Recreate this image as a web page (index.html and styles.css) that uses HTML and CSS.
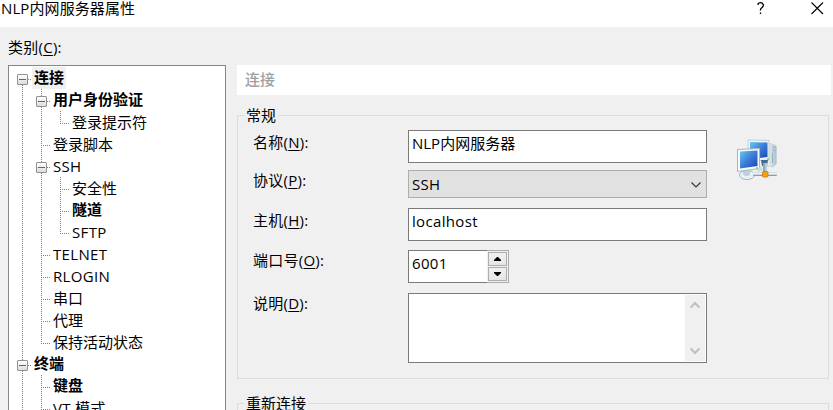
FILE: index.html
```html
<!DOCTYPE html>
<html lang="zh-CN">
<head>
<meta charset="utf-8">
<title>NLP内网服务器属性</title>
<link rel="stylesheet" href="styles.css">
</head>
<body>
<header class="titlebar">
  <h1 class="title">NLP内网服务器属性</h1>
  <svg class="help" width="8" height="13" viewBox="0 0 8 13"><path d="M1 3V2Q1.500 .7 3.500 .7T6.500 3Q6.500 4.500 4.800 5.700T3.500 8.500M3.500 10.500V12" fill="none" stroke="#000" stroke-width="1.300"/></svg>
  <svg class="close" width="13" height="13" viewBox="0 0 13 13"><path d="M.5 .5L12 12M12 .5L.5 12" stroke="#000" stroke-width="1.100"/></svg>
</header>
<main class="dialog">
  <div class="sidebar">
    <div class="caption">类别(<u>C</u>):</div>
    <div class="tree">
      <div class="row"><i class="down open"></i><b class="selected">连接</b></div>
      <div class="row"><i class="line"></i><i class="line open"></i><b>用户身份验证</b></div>
      <div class="row"><i class="line"></i><i class="line"></i><i class="up leaf"></i><span>登录提示符</span></div>
      <div class="row"><i class="line"></i><i class="line leaf"></i><span>登录脚本</span></div>
      <div class="row"><i class="line"></i><i class="line open"></i><span class="latin">SSH</span></div>
      <div class="row"><i class="line"></i><i class="line"></i><i class="line leaf"></i><span>安全性</span></div>
      <div class="row"><i class="line"></i><i class="line"></i><i class="line leaf"></i><b>隧道</b></div>
      <div class="row"><i class="line"></i><i class="line"></i><i class="up leaf"></i><span class="latin">SFTP</span></div>
      <div class="row"><i class="line"></i><i class="line leaf"></i><span class="latin">TELNET</span></div>
      <div class="row"><i class="line"></i><i class="line leaf"></i><span class="latin">RLOGIN</span></div>
      <div class="row"><i class="line"></i><i class="line leaf"></i><span>串口</span></div>
      <div class="row"><i class="line"></i><i class="line leaf"></i><span>代理</span></div>
      <div class="row"><i class="line"></i><i class="up leaf"></i><span>保持活动状态</span></div>
      <div class="row"><i class="line open"></i><b>终端</b></div>
      <div class="row"><i class="line"></i><i class="line leaf"></i><b>键盘</b></div>
      <div class="row"><i class="line"></i><i class="line leaf"></i><span class="latin">VT 模式</span></div>
    </div>
  </div>
  <div class="content">
    <div class="page-title">连接</div>
    <section class="group general">
      <h2 class="legend">常规</h2>
      <div class="form">
        <label>名称(<u>N</u>):</label><div class="field">NLP内网服务器</div>
        <label class="raised">协议(<u>P</u>):</label>
        <div class="field select"><span class="latin">SSH</span><svg width="10" height="6" viewBox="0 0 10 6"><path d="M.5 .5L5 5L9.500 .5" fill="none" stroke="#333" stroke-width="1.100"/></svg></div>
        <label>主机(<u>H</u>):</label><div class="field latin">localhost</div>
        <label class="raised">端口号(<u>O</u>):</label>
        <div class="port"><div class="field number latin">6001</div><div class="spinner">
          <div class="spin"><svg width="7" height="4"><path d="M0 4V3L3 0H4L7 3V4Z"/></svg></div>
          <div class="spin"><svg width="7" height="4"><path d="M0 0V1L3 4H4L7 1V0Z"/></svg></div>
        </div></div>
        <label class="raised">说明(<u>D</u>):</label>
        <div class="field memo"><div class="scrollbar">
          <svg width="10" height="8"><path d="M.7 6.500L5 2L9.300 6.500" fill="none" stroke="#bfbfbf" stroke-width="2"/></svg>
          <svg width="10" height="8"><path d="M.7 1.500L5 6L9.300 1.500" fill="none" stroke="#bfbfbf" stroke-width="2"/></svg>
        </div></div>
      </div>
      <svg class="network" width="42" height="42" viewBox="0 0 42 42">
        <defs>
          <linearGradient id="screen" x1="0" y1="0" x2="1" y2="1"><stop stop-color="#67c9f2"/><stop offset=".45" stop-color="#3f83dc"/><stop offset="1" stop-color="#1b43b0"/></linearGradient>
          <linearGradient id="tower"><stop stop-color="#f8fcfe"/><stop offset="1" stop-color="#a9bfca"/></linearGradient>
          <linearGradient id="pipe" x1="0" y1="0" x2="0" y2="1"><stop stop-color="#c5d5dc"/><stop offset=".45" stop-color="#f4fafc"/><stop offset="1" stop-color="#70838d"/></linearGradient>
        </defs>
        <path d="M32 4L39 6Q41 7 40.500 9V25L37 28L30 27Z" fill="url(#tower)" stroke="#c2d1d8" stroke-width=".7"/>
        <path d="M36.500 8L39.500 9M36.500 11L39.500 12M36.500 14V24" stroke="#94b0be" fill="none"/>
        <path d="M12 1L33 1.500V21L12 22Z" fill="#f2f8fb" stroke="#b3c4cd" stroke-width=".8"/>
        <path d="M14 3L31.500 3.500V18L14 20Z" fill="url(#screen)"/>
        <path d="M25 21H32L31 27H26Z" fill="#416c93"/>
        <path d="M29 24V34" stroke="#8faab8" stroke-width="4"/>
        <path d="M30 24V33" stroke="#e0edf3"/>
        <ellipse cx="11" cy="36" rx="7.500" ry="4.500" fill="#e8f3f8" stroke="#a0b5bf"/>
        <path d="M7 31H14V36Q11 38 7 36Z" fill="#bed0da"/>
        <path d="M1.500 10.500L23.500 9.500V29.500L1.500 32.500Z" fill="#f6fbfd" stroke="#a3b6c0"/>
        <path d="M4 12.500L21.500 11.500V27L4 29.500Z" fill="url(#screen)"/>
        <rect x="17" y="33" width="24" height="4" rx="1" fill="url(#pipe)"/>
        <path d="M20 31L25 27L27 31L22 33Z" fill="#cfdbe1"/>
        <rect x="26.500" y="32.500" width="5.500" height="5.500" rx="1" fill="#f4a20d" stroke="#c77516" stroke-width=".8"/>
        <path d="M20 29H22M31 20H33" stroke="#65d35b" stroke-width="1.500"/>
      </svg>
    </section>
    <section class="group reconnect"><h2 class="legend">重新连接</h2></section>
  </div>
</main>
</body>
</html>
```
FILE: styles.css
```css
*, *::before, *::after { box-sizing: border-box; }
html, body { height: 100%; overflow: hidden; }
body {
  margin: 0;
  display: flex;
  flex-direction: column;
  background: #f0f0f0;
  color: #000;
  font: 15px/20px "Open Sans", "Noto Sans CJK SC", sans-serif;
}
svg { display: block; flex: none; }
u { text-underline-offset: 2px; text-decoration-thickness: 1px; }
.titlebar { height: 27px; flex: none; display: flex; background: #fff; }
.title { flex: 1; margin: -2px 0 0 1px; font-size: 15px; font-weight: 400; letter-spacing: .1px; }
.help { margin: 2px 46px 0 0; }
.close { margin: 2px 9px 0 0; }
.dialog { flex: 1; min-height: 0; display: flex; gap: 11px; padding-left: 8px; }
.sidebar { width: 218px; flex: none; }
.caption { height: 38px; padding-top: 10px; letter-spacing: .25px; }
.tree { height: 345px; overflow: hidden; padding: 1px 0 0 4px; border: 1px solid #828790; border-bottom: 0; background: #fff; }
.row { display: flex; height: 22px; line-height: 21px; white-space: nowrap; }
.row b, .row span { padding: 0 2px; }
.row span { line-height: 23px; }
.row b { font-weight: 700; }
.row .selected { background: #f0f0f0; }
.latin { letter-spacing: .33px; }
.row i {
  --dots-y: repeating-linear-gradient(#808080 0 1px, transparent 1px 2px);
  --dots-x: repeating-linear-gradient(90deg, #808080 0 1px, transparent 1px 2px);
  position: relative;
  flex: none;
  width: 19px;
  height: 22px;
}
.line { background: var(--dots-y) 9px 0 / 1px 22px no-repeat; }
.up { background: var(--dots-y) 9px 0 / 1px 12px no-repeat; }
.down { background: var(--dots-y) 9px 12px / 1px 10px no-repeat; }
.leaf::after, .open::after {
  content: "";
  position: absolute;
  left: 9px;
  top: 12px;
  width: 9px;
  height: 1px;
  background: var(--dots-x);
}
.open::before {
  content: "";
  position: absolute;
  z-index: 1;
  left: 4px;
  top: 7px;
  width: 11px;
  height: 11px;
  border: 1px solid #919191;
  border-radius: 1px;
  background: linear-gradient(#4b63a7, #4b63a7) 1px 4px / 7px 1px no-repeat, linear-gradient(#fff, #dcdcdc);
}
.content { width: 594px; padding-top: 38px; }
.page-title { height: 30px; margin-bottom: 20px; padding: 4px 8px; background: #fff; color: #a0a0a0; font-weight: 500; }
.group { width: 592px; height: 264px; margin-bottom: 24px; border: 1px solid #dcdcdc; }
.general { display: flex; flex-wrap: wrap; align-content: flex-start; }
.reconnect { height: 7px; margin-bottom: 0; border-bottom: 0; }
.legend { width: max-content; height: 20px; margin: -11px 300px 0 6px; padding: 0 2px; background: #f0f0f0; font-size: 15px; font-weight: 400; }
.form {
  display: grid;
  grid-template-columns: 155px 299px;
  grid-template-rows: 33px 28px 33px 33px 70px;
  row-gap: 7px;
  margin: 5px 0 0 15px;
}
.form label { padding-top: 2px; letter-spacing: .25px; }
.form .raised { padding-top: 0; }
.field { height: 33px; padding: 2px 3px; border: 1px solid #7a7a7a; background: #fff; }
.select { display: flex; justify-content: space-between; height: 28px; padding: 3px 5px 0 3px; border-color: #adadad; background: #e1e1e1; }
.select svg { margin-top: 8px; }
.form > :nth-child(n+5) { position: relative; top: 3px; }
.form > :nth-child(n+7) { top: 5px; }
.form > :nth-child(n+9) { top: 8px; }
.port { display: flex; }
.number { width: 79px; border-right: 0; }
.spinner { width: 22px; height: 33px; display: grid; gap: 1px; padding: 1px; border: 1px solid #adadad; border-left: 0; background: #f0f0f0; }
.spin { width: 19px; height: 14px; display: flex; align-items: center; justify-content: center; border: 1px solid #adadad; background: linear-gradient(#f0f0f0, #e5e5e5); }
.memo { height: 70px; padding: 1px; display: flex; justify-content: flex-end; }
.scrollbar { width: 20px; display: flex; flex-direction: column; justify-content: space-between; align-items: center; padding: 6px 0; background: #f0f0f0; }
.network { margin: 14px 0 0 29px; }
```
